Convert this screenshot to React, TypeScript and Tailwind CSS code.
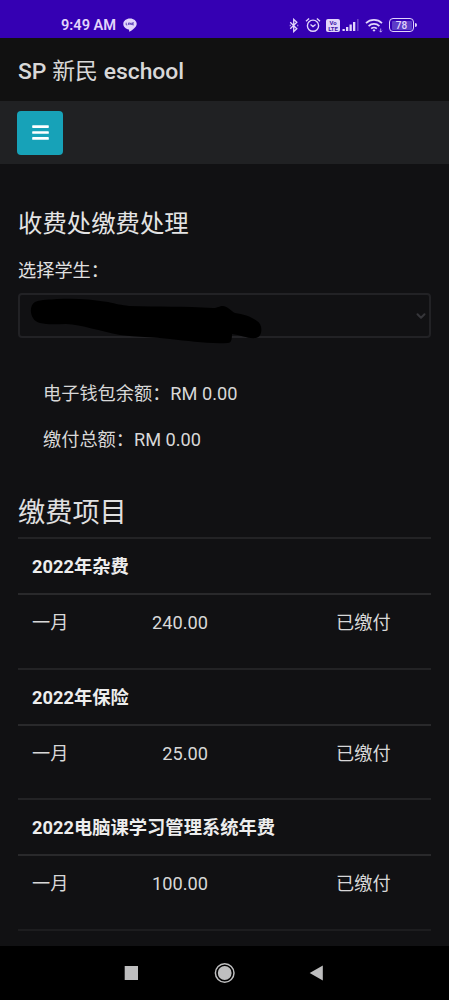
import { FaBars } from "react-icons/fa";
import { ChevronDown } from "lucide-react";

const groups = [
  { title: "2022年杂费", month: "一月", amount: "240.00", status: "已缴付" },
  { title: "2022年保险", month: "一月", amount: "25.00", status: "已缴付" },
  { title: "2022电脑课学习管理系统年费", month: "一月", amount: "100.00", status: "已缴付" },
];

function StatusBar() {
  return (
    <div className="flex h-[38px] shrink-0 items-start bg-[#3500b3] pt-[15px] text-[#e2d5fb]">
      <span className="ml-[61px] w-[55px] whitespace-nowrap text-[14.6px] leading-[21px] font-semibold">
        9:49 AM
      </span>
      <svg className="mt-[3px] ml-[7px] h-[14px] w-[14px]" viewBox="0 0 14 14">
        <path
          d="M7 .5C3.2.5.3 2.9.3 6c0 2.8 2.4 5 5.4 5.4.5.1.5.7.4 1.9 0 .4.3.5.6.3C9.5 12 13.7 9 13.7 6 13.7 2.9 10.8.5 7 .5Z"
          fill="currentColor"
        />
        <path d="M3.2 4.7v2.2h1.1M5.5 4.7v2.2M6.8 6.9V4.7l1.5 2.2V4.7M10.8 4.7H9.6v2.2h1.2M9.6 5.8h1" stroke="#4a2bb0" strokeWidth=".8" fill="none" />
      </svg>

      <svg className="ml-[152px] mt-[3px] h-[15px] w-[10px]" viewBox="0 0 10 16" fill="none" stroke="currentColor">
        <path d="m1 4.5 7 7L4.7 14.5V1.5L8 4.6l-7 6.9" strokeWidth="1.4" />
        <path d="M.5 8h.9M8.6 8h.9" strokeWidth="1.5" />
      </svg>
      <svg className="ml-[6px] mt-[2px] h-[16px] w-[16px]" viewBox="0 0 16 16" fill="none" stroke="currentColor">
        <circle cx="8" cy="8.7" r="5.6" strokeWidth="1.4" />
        <path d="m1 4.2 3.1-2.7M15 4.2l-3.1-2.7" strokeWidth="1.4" />
        <path d="m5.5 7.6 2.5 2 2.6-2" strokeWidth="1.3" />
      </svg>
      <div className="mt-[4px] ml-[5px] flex h-[13px] w-[14px] flex-col items-center justify-center rounded-[2px] bg-[#e2d5fb] text-[6px] leading-[6px] font-bold text-[#3c16a8]">
        <span>Vo</span>
        <span>LTE</span>
      </div>
      <svg className="ml-[2px] mt-[3px] h-[14px] w-[18px]" viewBox="0 0 18 14" fill="currentColor">
        <rect x=".5" y="11" width="2.3" height="2" />
        <rect x="4" y="9" width="2.3" height="4" />
        <rect x="7.5" y="6.5" width="2.3" height="6.5" />
        <rect x="11" y="4" width="2.3" height="9" />
        <rect x="15" y="1" width="1.6" height="12" opacity=".3" />
      </svg>
      <svg className="ml-[5px] mt-[3px] h-[15px] w-[18px]" viewBox="0 0 18 15" fill="none" stroke="currentColor" strokeWidth="1.7">
        <path d="M1 5.2a11.5 11.5 0 0 1 16 0M3.6 8.1a7.7 7.7 0 0 1 10.8 0M6.2 10.7a4 4 0 0 1 5.6 0" />
        <path d="m7.5 12.2 1.5-1 1.5 1-1.5 1.6Z" fill="currentColor" stroke="none" />
        <path d="M15.7 10.5v3.7M14.3 12.7l1.4 1.4 1.4-1.4" strokeWidth="1" opacity=".7" />
      </svg>
      <div className="mt-[3px] ml-[6px] flex items-center">
        <div className="flex h-[14px] w-[25px] rounded-[4px] border-[1.5px] border-[#e2d5fb] p-[1.5px]">
          <span className="flex-1 rounded-[1px] bg-[#5c3cc8] text-center text-[10px] leading-[9px] font-medium">
            78
          </span>
        </div>
        <span className="ml-px h-[4px] w-[2px] rounded-r bg-[#e2d5fb]" />
      </div>
    </div>
  );
}

function NavBar() {
  return (
    <div className="h-[54px] shrink-0 bg-black">
      <svg className="h-[54px] w-full" viewBox="0 0 449 54" fill="#bebebf">
        <rect x="124.7" y="20" width="13.3" height="14" />
        <circle cx="224.7" cy="27" r="6.9" />
        <circle cx="224.7" cy="27" r="9.3" fill="none" stroke="#bebebf" strokeWidth="1.5" />
        <path d="M309.7 27 322.8 19.5v15Z" />
      </svg>
    </div>
  );
}

export default function App() {
  return (
    <div className="flex h-[1000px] w-[449px] flex-col overflow-hidden bg-[#111113] font-[Roboto,'Noto_Sans_CJK_SC',sans-serif] text-[18.2px] text-[#d8d8d8]">
      <StatusBar />

      <header className="flex h-[63px] shrink-0 items-center bg-[#111111] pt-[5px] pl-[18px] text-[22.9px] font-medium">
        <h1 className="whitespace-pre">
          SP <span className="font-normal">新民</span> eschool
        </h1>
      </header>

      <div className="h-[63px] shrink-0 bg-[#202123] pt-[10px] pl-[17px]">
        <button
          type="button"
          aria-label="Menu"
          className="flex h-[44px] w-[46px] items-center justify-center rounded-[4px] bg-[#17a2b8] pb-[2px] text-white"
        >
          <FaBars className="h-[19px] w-[17px]" />
        </button>
      </div>

      <main className="flex-1 overflow-hidden px-[18px] pt-[43px]">
        <h2 className="h-[34px] text-[24.4px] leading-[34px] text-[#e4e4e4]">收费处缴费处理</h2>
        <label className="mt-[16px] block h-[28px] leading-[28px] text-[#e0e0e0]">选择学生：</label>

        <div className="relative mt-[8px] flex h-[45px] w-[413px] items-center justify-end rounded-[4px] border-2 border-[#222225] pr-px">
          <ChevronDown className="h-[14px] w-[14px] text-[#36363a]" strokeWidth={3.5} />
          <svg className="absolute top-[2px] left-[10px] h-[48px] w-[234px]" viewBox="0 0 234 48">
            <path
              d="M5 5C12 2 20 3 27 2 45 1 60 2 78 5c9 2 13 3 21 4 30 1 55 0 84 2 5 0 6-2 10-2 6 1 8 5 12 7 8 1 17 4 22 8 6 3 6 16-1 17-8 1-15-3-24-4 0 6-1 9-4 9-21 1-38-2-58-4-17-2-34-2-50-4-20-4-38-10-54-11-9 0-18 1-26-1C0 24-2 9 5 5Z"
              fill="#000"
            />
          </svg>
        </div>

        <div className="mt-[33px] ml-[25px] leading-[46px]">
          <p>电子钱包余额：RM 0.00</p>
          <p>缴付总额：RM 0.00</p>
        </div>

        <h3 className="mt-[28px] h-[46px] text-[27.2px] leading-[44px] text-[#e0e0e0]">缴费项目</h3>

        <div className="w-[413px]">
          {groups.map((group) => (
            <section key={group.title} className="h-[130.7px] border-t-2 border-[#232325]">
              <h4 className="h-[54px] pl-[14px] text-[18.3px] leading-[55px] font-bold text-[#ededed]">
                {group.title}
              </h4>
              <div className="flex h-[74px] border-t-2 border-[#29292b] pl-[14px] leading-[56px]">
                <span className="w-[90px]">{group.month}</span>
                <span className="w-[86px] text-right">{group.amount}</span>
                <span className="ml-[128px]">{group.status}</span>
              </div>
            </section>
          ))}
          <div className="border-t-2 border-[#1d1d1f]" />
        </div>
      </main>

      <NavBar />
    </div>
  );
}
